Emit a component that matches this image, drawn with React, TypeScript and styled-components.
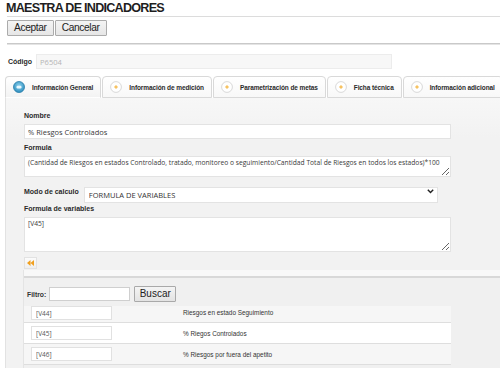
import React from 'react';
import styled, { createGlobalStyle } from 'styled-components';

const SANS = '"Liberation Sans", Arial, sans-serif';
const OPEN = '"Open Sans", "DejaVu Sans", sans-serif';

const GlobalStyle = createGlobalStyle`
  html, body { margin: 0; padding: 0; background: #fff; }
  body { font-family: ${SANS}; }
  * { box-sizing: border-box; }
`;

const Page = styled.div`
  width: 500px;
  height: 368px;
  overflow: hidden;
  display: flex;
  flex-direction: column;
`;

const TitleBar = styled.div`
  margin-left: 7px;
  height: 17px;
  border-bottom: 1px solid #dcdcdc;
`;

const Title = styled.h1`
  margin: 0 0 0 -1px;
  padding-top: 1px;
  font-family: ${SANS};
  font-weight: bold;
  font-size: 12.6px;
  letter-spacing: -0.75px;
  line-height: 15px;
  color: #1e1e1e;
`;

const Toolbar = styled.div`
  display: flex;
  gap: 1px;
  margin: 3px 0 0 7px;
`;

const Button = styled.button`
  height: 16px;
  padding: 0 6px;
  border: 1px solid #ababab;
  border-radius: 1px;
  background: linear-gradient(#f4f4f4, #e6e6e6);
  font-family: ${SANS};
  font-size: 10.2px;
  letter-spacing: -0.35px;
  color: #222;
  line-height: 14px;
`;

const Divider = styled.div`
  margin: 7px 0 0 7px;
  height: 2px;
  border-top: 1px solid #c9c9c9;
  border-bottom: 1px solid #e4e4e4;
`;

const CodeRow = styled.div`
  display: flex;
  align-items: center;
  margin: 9px 0 0 8px;
  height: 15px;
  gap: 4px;
`;

const FieldLabel = styled.label<{ $top?: number }>`
  display: block;
  margin-top: ${p => p.$top ?? 0}px;
  font: bold 7px ${SANS};
  line-height: 10px;
  color: #2a2a2a;
  white-space: nowrap;
`;

const CodeInput = styled.input`
  width: 356px;
  height: 15px;
  border: 1px solid #ececec;
  background: #f7f7f7;
  padding: 0 3px;
  font: 7.5px ${OPEN};
  color: #b5b5b5;
  outline: none;
`;

const TabRow = styled.div`
  display: flex;
  align-items: flex-end;
  margin: 7px 0 0 5px;
  height: 22px;
`;

const Tab = styled.div<{ $active?: boolean }>`
  display: flex;
  align-items: center;
  gap: 7px;
  height: 22px;
  padding: 0 7px 0 7px;
  margin-right: 1px;
  border: 1px solid #d9d9d9;
  border-bottom-color: ${p => (p.$active ? 'transparent' : '#d9d9d9')};
  border-radius: 4px 4px 0 0;
  background: ${p => (p.$active ? 'linear-gradient(#ffffff, #f3f3f3)' : 'linear-gradient(#ffffff, #f8f8f8)')};
  font: bold 6.5px ${SANS};
  letter-spacing: -0.1px;
  color: #2a2a2a;
  white-space: nowrap;
`;

const Panel = styled.div`
  flex: 1;
  margin-left: 5px;
  border-left: 1px solid #e2e2e2;
  background: linear-gradient(#f7f7f7, #f2f2f2 40px);
  display: flex;
  flex-direction: column;
`;

const Form = styled.div`
  padding: 13px 49px 0 18px;
  display: flex;
  flex-direction: column;
`;

const TextInput = styled.input`
  margin-top: 3px;
  width: 100%;
  height: 15px;
  border: 1px solid #e3e3e3;
  background: #fff;
  padding: 0 3px;
  font: 7.5px ${OPEN};
  color: #3a3a3a;
  outline: none;
`;

const TextArea = styled.textarea<{ $h: number }>`
  margin-top: 3px;
  width: 100%;
  height: ${p => p.$h}px;
  border: 1px solid #e3e3e3;
  background: #fff;
  padding: 1px 3px;
  font: 6.7px ${OPEN};
  line-height: 10px;
  color: #3a3a3a;
  resize: both;
  outline: none;
  display: block;
`;

const InlineRow = styled.div`
  display: flex;
  align-items: center;
  gap: 5px;
  margin-top: 7px;
  height: 16px;
`;

const SelectWrap = styled.div`
  position: relative;
  width: 354px;
  height: 16px;
`;

const Select = styled.select`
  appearance: none;
  width: 100%;
  height: 16px;
  border: 1px solid #e3e3e3;
  background: #fff;
  padding: 0 4px;
  font: 7.5px ${OPEN};
  color: #333;
  outline: none;
`;

const Chevron = styled.svg`
  position: absolute;
  right: 4px;
  top: 5px;
  pointer-events: none;
`;

const BackButton = styled.div`
  margin-top: 5px;
  width: 13px;
  height: 12px;
  border: 1px solid #e2e2e2;
  background: linear-gradient(#fbfbfb, #efefef);
  display: flex;
  align-items: center;
  justify-content: center;
`;

const GridBox = styled.div`
  flex: 1;
  margin: 1px 0 0 17px;
  border-left: 1px solid #e4e4e4;
  background: #f0f0f0;
`;

const GridTop = styled.div`
  height: 8px;
  background: #f8f8f8;
  border-bottom: 2px solid #d8d8d8;
`;

const FilterRow = styled.div`
  display: flex;
  align-items: center;
  height: 16px;
  margin-top: 8px;
  padding-left: 3px;
  gap: 3px;
`;

const FilterLabel = styled.span`
  font: bold 6.8px ${SANS};
  color: #333;
`;

const FilterInput = styled.input`
  width: 81px;
  height: 14px;
  border: 1px solid #cfcfcf;
  background: #fff;
  outline: none;
`;

const SearchButton = styled.button`
  margin-left: 1px;
  width: 42px;
  height: 16px;
  padding: 0;
  border: 1px solid #a9a9a9;
  border-radius: 1px;
  background: linear-gradient(#f4f4f4, #e3e3e3);
  font: 10px ${SANS};
  color: #222;
  line-height: 14px;
`;

const Table = styled.div`
  margin-top: 4px;
  width: 427px;
`;

const Row = styled.div<{ $alt?: boolean; $cut?: boolean }>`
  display: grid;
  grid-template-columns: 152px 1fr;
  align-items: ${p => (p.$cut ? 'start' : 'center')};
  height: ${p => (p.$cut ? 17 : 21)}px;
  background: ${p => (p.$alt ? '#f6f6f6' : '#ffffff')};
  border-bottom: 1px solid #dedede;
`;

const CodeCell = styled.div`
  padding-left: 7px;
  display: flex;
`;

const VarInput = styled.input`
  width: 81px;
  height: 14px;
  border: 1px solid #e1e1e1;
  background: #fff;
  padding: 0 4px;
  font: 6.5px ${OPEN};
  color: #555;
  outline: none;
`;

const DescCell = styled.div<{ $cut?: boolean }>`
  padding-left: 7px;
  padding-top: ${p => (p.$cut ? 3 : 0)}px;
  font: 6.4px ${SANS};
  color: #333;
  white-space: nowrap;
`;

const TabIcon = ({ active }: { active?: boolean }) =>
  active ? (
    <svg width="12" height="12" viewBox="0 0 12 12">
      <defs>
        <radialGradient id="tg" cx="50%" cy="40%" r="60%">
          <stop offset="0%" stopColor="#8fd3ef" />
          <stop offset="100%" stopColor="#2c8dbd" />
        </radialGradient>
      </defs>
      <circle cx="6" cy="6" r="5.5" fill="url(#tg)" stroke="#2a7eaa" strokeWidth="0.8" />
      <rect x="3.5" y="4.8" width="5" height="2.6" rx="1.2" fill="#e8f7fd" />
    </svg>
  ) : (
    <svg width="12" height="12" viewBox="0 0 12 12">
      <circle cx="6" cy="6" r="5.4" fill="#fff" stroke="#cfcfcf" strokeWidth="0.8" />
      <path d="M6 4.2v3.6M4.2 6h3.6" stroke="#f2a81e" strokeWidth="0.9" />
    </svg>
  );

const tabs = [
  { label: 'Información General', active: true },
  { label: 'Información de medición' },
  { label: 'Parametrización de metas' },
  { label: 'Ficha técnica' },
  { label: 'Información adicional' },
];

const rows = [
  { code: '[V44]', desc: 'Riesgos en estado Seguimiento', alt: true, cut: true },
  { code: '[V45]', desc: '% Riegos Controlados' },
  { code: '[V46]', desc: '% Riesgos por fuera del apetito', alt: true },
];

const FORMULA =
  '(Cantidad de Riesgos en estados Controlado, tratado, monitoreo o seguimiento/Cantidad Total de Riesgos en todos los estados)*100';

export default function App() {
  return (
    <>
      <GlobalStyle />
      <Page>
        <TitleBar>
          <Title>MAESTRA DE INDICADORES</Title>
        </TitleBar>
        <Toolbar>
          <Button>Aceptar</Button>
          <Button>Cancelar</Button>
        </Toolbar>
        <Divider />
        <CodeRow>
          <FieldLabel>Código</FieldLabel>
          <CodeInput readOnly value="P6504" />
        </CodeRow>
        <TabRow>
          {tabs.map(t => (
            <Tab key={t.label} $active={t.active}>
              <TabIcon active={t.active} />
              {t.label}
            </Tab>
          ))}
        </TabRow>
        <Panel>
          <Form>
            <FieldLabel>Nombre</FieldLabel>
            <TextInput readOnly value="% Riesgos Controlados" />
            <FieldLabel $top={4}>Formula</FieldLabel>
            <TextArea $h={21} readOnly value={FORMULA} />
            <InlineRow>
              <FieldLabel>Modo de calculo</FieldLabel>
              <SelectWrap>
                <Select defaultValue="fv">
                  <option value="fv">FORMULA DE VARIABLES</option>
                </Select>
                <Chevron width="7" height="5" viewBox="0 0 7 5">
                  <path d="M0.8 0.8L3.5 3.6L6.2 0.8" fill="none" stroke="#222" strokeWidth="1.4" />
                </Chevron>
              </SelectWrap>
            </InlineRow>
            <FieldLabel $top={4}>Formula de variables</FieldLabel>
            <TextArea $h={35} readOnly value="[V45]" />
            <BackButton>
              <svg width="7" height="6" viewBox="0 0 7 6">
                <path d="M3.5 0L0 3L3.5 6Z M7 0L3.5 3L7 6Z" fill="#f0a020" />
              </svg>
            </BackButton>
          </Form>
          <GridBox>
            <GridTop />
            <FilterRow>
              <FilterLabel>Filtro:</FilterLabel>
              <FilterInput />
              <SearchButton>Buscar</SearchButton>
            </FilterRow>
            <Table>
              {rows.map(r => (
                <Row key={r.code} $alt={r.alt} $cut={r.cut}>
                  <CodeCell>
                    <VarInput readOnly value={r.code} />
                  </CodeCell>
                  <DescCell $cut={r.cut}>{r.desc}</DescCell>
                </Row>
              ))}
            </Table>
          </GridBox>
        </Panel>
      </Page>
    </>
  );
}
